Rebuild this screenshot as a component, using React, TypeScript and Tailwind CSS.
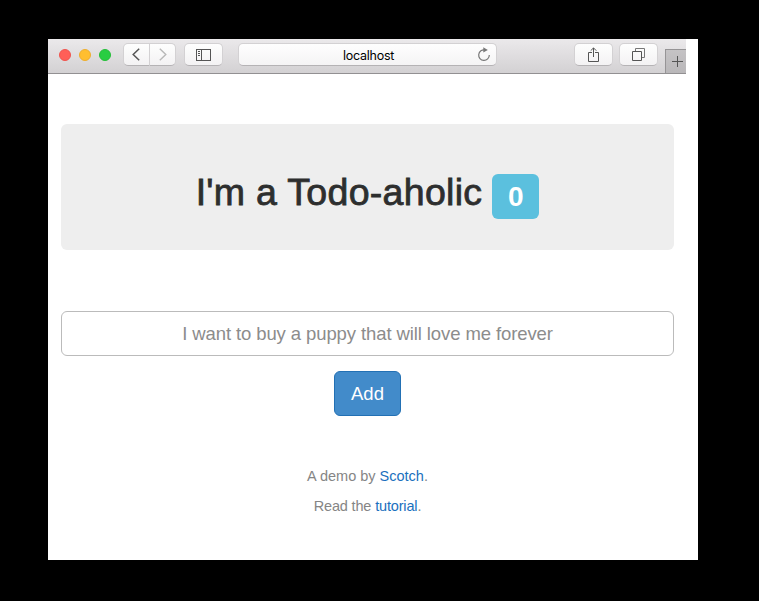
import type { ReactNode } from "react";

function ToolButton({ className, children }: { className: string; children: ReactNode }) {
  return (
    <button
      className={`flex h-[23px] shrink-0 items-center justify-center border border-[#d3d1d3] border-b-[#b5b3b5] bg-linear-to-b from-[#fefefe] to-[#f3f2f3] ${className}`}
    >
      {children}
    </button>
  );
}

function Toolbar() {
  return (
    <header className="flex h-[35px] w-[638px] border-b border-[#929092] bg-linear-to-b from-[#ebe9eb] to-[#d3d1d3] pt-1 pl-[11px]">
      <div className="mt-[6px] flex h-3 gap-2">
        <span className="size-3 rounded-full border border-[#f0544e] bg-[#ff5f58]" />
        <span className="size-3 rounded-full border border-[#eeae2d] bg-[#ffbe2f]" />
        <span className="size-3 rounded-full border border-[#24be38] bg-[#29cd42]" />
      </div>
      <div className="ml-3 flex">
        <ToolButton className="w-[27px] rounded-l-[5px] pr-[2px]">
          <svg width="8" height="13" viewBox="0 0 8 13" fill="none" stroke="#555" strokeWidth="1.5">
            <path d="M7.2 .7 1.2 6.5 7.2 12.3" />
          </svg>
        </ToolButton>
        <ToolButton className="w-[26px] rounded-r-[5px] border-l-0">
          <svg width="8" height="13" viewBox="0 0 8 13" fill="none" stroke="#b8b8b8" strokeWidth="1.4">
            <path d="M.8 .7 6.8 6.5 .8 12.3" />
          </svg>
        </ToolButton>
      </div>
      <ToolButton className="ml-2 w-[39px] rounded-[5px]">
        <svg width="15" height="12" viewBox="0 0 15 12" fill="none" stroke="#555" shapeRendering="crispEdges">
          <path d="M.5.5h14v11H.5zM5.5.5v11M2 2.5h2M2 4.5h2M2 6.5h2" />
        </svg>
      </ToolButton>
      <div className="ml-[15px] flex h-[23px] w-[259px] items-center rounded-[5px] border border-[#d3d1d3] border-b-[#b5b3b5] bg-linear-to-b from-[#fefefe] to-[#f5f4f5] pr-[5px] pl-[21px]">
        <span className="flex-1 pt-[2px] text-center font-[Inter,sans-serif] text-[12.5px] leading-4 tracking-[-0.25px] text-black">
          localhost
        </span>
        <svg width="14" height="15" viewBox="0 0 14 15" fill="none" stroke="#777" strokeWidth="1.2">
          <path d="M8 2.9A5.3 5.3 0 1 0 12.3 8" />
          <path d="M6.3 .2 10.8 3.1 6.3 5.4z" fill="#777" stroke="none" />
        </svg>
      </div>
      <ToolButton className="ml-[77px] w-[39px] rounded-[5px]">
        <svg width="11" height="16" viewBox="0 0 11 16" fill="none" stroke="#555">
          <path d="M4 5.5H.5v9h10v-9H7M5.5 10V1M2.7 3.7 5.5.9l2.8 2.8" />
        </svg>
      </ToolButton>
      <ToolButton className="ml-[6px] w-[39px] rounded-[5px]">
        <svg width="13" height="13" viewBox="0 0 13 13" fill="none" stroke="#555">
          <path d="M.5 3.5h9v9h-9z" />
          <path d="M3.5 3V.5h9v9H10" stroke="#777" />
        </svg>
      </ToolButton>
      <button className="mt-[6px] ml-[7px] flex h-6 w-[21px] items-center justify-center border-t border-l border-[#969496] bg-linear-to-b from-[#c5c3c5] to-[#b9b7b9] pl-[3px]">
        <svg width="11" height="11" viewBox="0 0 11 11" stroke="#555" shapeRendering="crispEdges" className="shrink-0">
          <path d="M5.5 0v11M0 5.5h11" />
        </svg>
      </button>
    </header>
  );
}

export default function App() {
  return (
    <div className="h-[601px] w-[759px] overflow-hidden bg-black pt-[39px] pl-12 font-['Liberation_Sans',Arial,sans-serif]">
      <div className="h-[521px] w-[650px] bg-white">
        <Toolbar />
        <main className="flex w-[638px] flex-col items-center px-[13px] pt-[50px] pr-3">
          <section className="flex h-[126px] w-full justify-center gap-[10px] rounded-md bg-[#eee] pt-[48px]">
            <h1 className="text-[37.5px] leading-10 tracking-[0.3px] whitespace-nowrap text-[#2d2e2e] [-webkit-text-stroke:0.8px_#2d2e2e]">
              I'm a Todo-aholic
            </h1>
            <span className="mt-[2px] flex h-[45px] w-[47px] items-center justify-center rounded-md bg-[#5bc0de] text-[28px] font-bold text-white">
              0
            </span>
          </section>
          <input
            className="mt-[61px] h-[45px] w-full rounded-md border border-[#bbb] bg-white text-center text-[18.5px] tracking-[-0.1px] placeholder:text-[#8c8c8c]"
            placeholder="I want to buy a puppy that will love me forever"
          />
          <button className="mt-[15px] h-[45px] w-[67px] rounded-md border border-[#2270b4] bg-[#428bca] text-[18.5px] text-white">
            Add
          </button>
          <footer className="mt-[50px] text-center text-[14.5px] leading-5 text-[#858585]">
            <p>
              A demo by <a className="text-[#1b70be]">Scotch</a>.
            </p>
            <p className="mt-[10px] tracking-[-0.16px]">
              Read the <a className="text-[#1b70be]">tutorial</a>.
            </p>
          </footer>
        </main>
      </div>
    </div>
  );
}
